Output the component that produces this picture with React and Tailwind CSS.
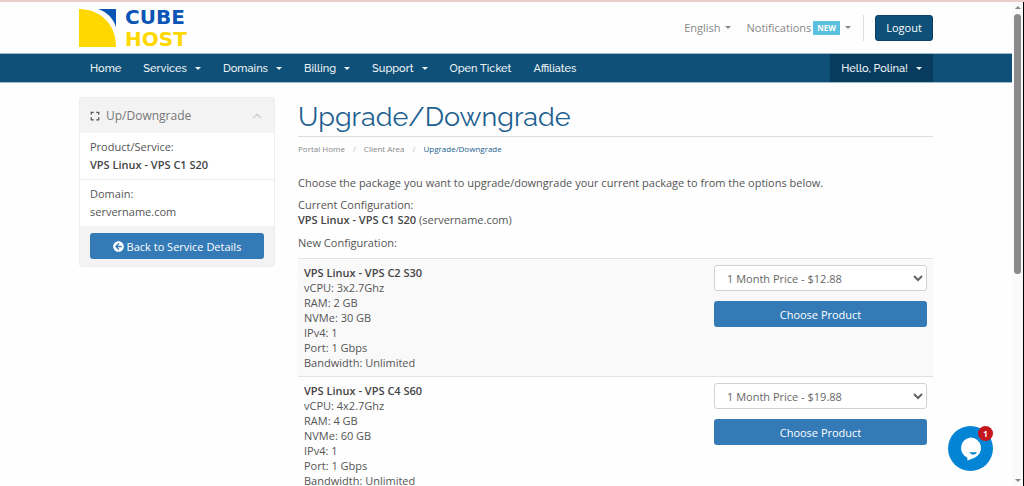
import { FaArrowCircleLeft, FaExpand } from "react-icons/fa";
import { ChevronUp } from "lucide-react";

const navItems = [
  { label: "Home" },
  { label: "Services", menu: true },
  { label: "Domains", menu: true },
  { label: "Billing", menu: true },
  { label: "Support", menu: true },
  { label: "Open Ticket" },
  { label: "Affiliates" },
];

const products = [
  {
    name: "VPS Linux - VPS C2 S30",
    specs: [
      "vCPU: 3x2.7Ghz",
      "RAM: 2 GB",
      "NVMe: 30 GB",
      "IPv4: 1",
      "Port: 1 Gbps",
      "Bandwidth: Unlimited",
    ],
    price: "1 Month Price - $12.88",
  },
  {
    name: "VPS Linux - VPS C4 S60",
    specs: [
      "vCPU: 4x2.7Ghz",
      "RAM: 4 GB",
      "NVMe: 60 GB",
      "IPv4: 1",
      "Port: 1 Gbps",
      "Bandwidth: Unlimited",
    ],
    price: "1 Month Price - $19.88",
  },
];

const Caret = () => (
  <svg className="w-[6px] h-[3px] shrink-0" viewBox="0 0 6 3" fill="currentColor">
    <path d="M0 0h6L3 3z" />
  </svg>
);

const Logo = () => (
  <a href="#home" className="flex items-center gap-[9px]">
    <svg className="w-[37px] h-[38px]" viewBox="0 0 37 38">
      <path d="M0 0C21 0 37 15 37 38H0z" fill="#ffd800" />
      <path d="M19 0H37V18C34 9 28 3 19 0z" fill="#0a55b5" />
    </svg>
    <span className="flex flex-col font-['DejaVu_Sans',sans-serif] font-bold text-[20px] leading-[22px]">
      <span className="text-[#0a55b5]">CUBE</span>
      <span className="text-[#ffd800]">HOST</span>
    </span>
  </a>
);

const Header = () => (
  <header>
    <div className="max-w-[854px] mx-auto h-[51px] flex items-center justify-between">
      <Logo />
      <div className="flex items-center text-[#888]">
        <button className="flex items-center gap-1">
          English <Caret />
        </button>
        <button className="flex items-center ml-4">
          Notifications
          <span className="bg-[#5bc0de] text-white text-[8px] leading-[14px] font-bold px-1 ml-[2px] mr-[5px]">
            NEW
          </span>
          <Caret />
        </button>
        <span className="w-px h-[26px] bg-[#ddd] ml-3 mr-[11px]" />
        <button className="h-[26px] w-[58px] bg-[#0e5077] border border-[#0a4264] rounded-[3px] text-white">
          Logout
        </button>
      </div>
    </div>
    <nav className="bg-[#0e5077] border-y border-[#9db9c9] font-[Raleway,Lato,sans-serif] font-medium text-[#eef3f6]">
      <div className="max-w-[854px] mx-auto h-[28px] flex items-stretch">
        {navItems.map((item) => (
          <button key={item.label} className="flex items-center gap-2 px-[11px]">
            {item.label}
            {item.menu && <Caret />}
          </button>
        ))}
        <button className="flex items-center gap-2 px-[11px] ml-auto bg-[#083c5e]">
          Hello, Polina! <Caret />
        </button>
      </div>
    </nav>
  </header>
);

const Sidebar = () => (
  <aside className="w-[196px] shrink-0 self-start border border-[#eee] rounded-[3px] bg-white">
    <div className="flex items-center h-[35px] px-[10px] bg-[#f3f3f3] text-[#777] text-[12px]">
      <FaExpand className="w-[10px] h-[10px] text-[#555] mr-[6px]" />
      Up/Downgrade
      <ChevronUp className="w-[14px] h-[14px] text-[#ccc] ml-auto" strokeWidth={2} />
    </div>
    <div className="px-[10px] py-[5px] leading-[18px] border-b border-[#eee]">
      <div>Product/Service:</div>
      <div className="font-semibold text-[#444]">VPS Linux - VPS C1 S20</div>
    </div>
    <div className="px-[10px] py-[5px] leading-[18px]">
      <div>Domain:</div>
      <div>servername.com</div>
    </div>
    <div className="px-[10px] py-[7px] bg-[#f3f3f3]">
      <button className="w-full h-[26px] flex items-center justify-center gap-[3px] rounded-[3px] bg-[#337ab7] text-white">
        <FaArrowCircleLeft className="w-[11px] h-[11px]" />
        Back to Service Details
      </button>
    </div>
  </aside>
);

const ProductTable = () => (
  <table className="w-full">
    <tbody>
      {products.map((product, idx) => (
        <tr
          key={product.name}
          className="border-t border-[#e2e2e2] odd:bg-[#f9f9f9] align-top"
        >
          <td className="p-[6px]">
            <strong className="font-semibold text-[#444]">{product.name}</strong>
            {product.specs.map((spec) => (
              <div key={spec}>{spec}</div>
            ))}
          </td>
          <td className="p-[6px] w-[225px]">
            <select
              id={`cycle-${idx}`}
              aria-label={`Billing cycle for ${product.name}`}
              className="block w-full h-[26px] px-2 mb-[10px] bg-white border border-[#d2d2d2] rounded-[3px] text-[#666]"
            >
              <option>{product.price}</option>
            </select>
            <button className="block w-full h-[26px] rounded-[3px] bg-[#337ab7] text-white">
              Choose Product
            </button>
          </td>
        </tr>
      ))}
    </tbody>
  </table>
);

const ChatButton = () => (
  <button
    aria-label="Open chat"
    className="absolute right-[31px] bottom-[15px] w-[45px] h-[45px] rounded-full bg-[#0484d4]"
  >
    <svg className="w-[45px] h-[45px]" viewBox="0 0 45 45">
      <path
        d="M22.5 11.500a10.500 10.500 0 0 1 3.500 20.400L19.500 34.500l-.3-3A10.500 10.500 0 0 1 22.500 11.500z"
        fill="#fff"
      />
      <path d="M21.500 26.200h7.500c-1.500 3.200-6 3.200-7.500 0z" fill="#0484d4" />
    </svg>
    <span className="absolute top-0 right-0 w-[15px] h-[15px] rounded-full bg-[#c4161c] text-white text-[8px] leading-[15px] font-bold">
      1
    </span>
  </button>
);

const ScrollTrack = () => (
  <div className="w-3 shrink-0 flex flex-col items-center justify-between bg-[#fafafa] border-r border-black pt-1 pb-1 text-[#888]">
    <div className="flex flex-col items-center gap-[5px]">
      <span className="rotate-180 flex">
        <Caret />
      </span>
      <div className="w-[7px] h-[260px] rounded-full bg-[#8b8b8b]" />
    </div>
    <Caret />
  </div>
);

const App = () => (
  <div className="relative h-screen flex flex-col overflow-hidden bg-[#fefefe] font-['Open_Sans',sans-serif] text-[11px] leading-[15px] text-[#555]">
    <div className="h-[2px] shrink-0 bg-[#eccfcd]" />
    <div className="flex flex-1 min-h-0">
      <div className="flex-1 min-w-0 overflow-hidden">
        <Header />
        <div className="max-w-[854px] mx-auto pt-[14px] flex gap-[23px]">
          <Sidebar />
          <main className="flex-1 min-w-0">
            <h1 className="font-[Raleway,Lato,sans-serif] text-[27px] leading-[39px] text-[#1c6090] border-b border-[#ddd]">
              Upgrade/Downgrade
            </h1>
            <ol className="flex pt-1 text-[8px] text-[#888]">
              <li>
                <a href="#portal">Portal Home</a>
                <span className="px-2 text-[#bbb]">/</span>
              </li>
              <li>
                <a href="#client">Client Area</a>
                <span className="px-2 text-[#bbb]">/</span>
              </li>
              <li className="text-[#1c6090]">Upgrade/Downgrade</li>
            </ol>
            <p className="mt-[19px]">
              Choose the package you want to upgrade/downgrade your current
              package to from the options below.
            </p>
            <p className="mt-[7px]">
              Current Configuration:
              <br />
              <strong className="font-semibold text-[#444]">
                VPS Linux - VPS C1 S20
              </strong>{" "}
              (servername.com)
            </p>
            <p className="my-2">New Configuration:</p>
            <ProductTable />
          </main>
        </div>
      </div>
      <ScrollTrack />
    </div>
    <ChatButton />
  </div>
);

export default App;
